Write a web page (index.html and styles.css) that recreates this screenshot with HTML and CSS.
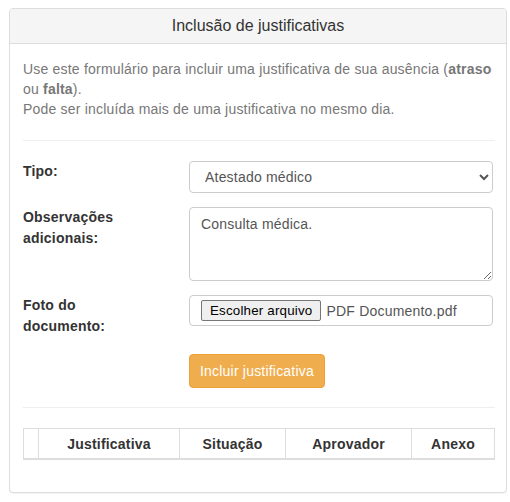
FILE: index.html
```html
<!DOCTYPE html>
<html lang="pt-BR">
<head>
<meta charset="utf-8">
<title>Inclusão de justificativas</title>
<link rel="stylesheet" href="styles.css">
</head>
<body>
<div class="page">
  <div class="panel">
    <div class="panel-heading">Inclusão de justificativas</div>
    <div class="panel-body">
      <p class="intro">Use este formulário para incluir uma justificativa de sua ausência (<b>atraso</b> ou <b>falta</b>).<br>Pode ser incluída mais de uma justificativa no mesmo dia.</p>
      <hr class="sep sep-top">
      <form class="form">
        <div class="row">
          <label class="lbl" for="tipo">Tipo:</label>
          <select id="tipo" class="control select">
            <option>Atestado médico</option>
            <option>Consulta</option>
          </select>
        </div>
        <div class="row">
          <label class="lbl" for="obs">Observações adicionais:</label>
          <textarea id="obs" class="control textarea">Consulta médica.</textarea>
        </div>
        <div class="row">
          <span class="lbl">Foto do documento:</span>
          <div class="control file">
            <span class="file-btn">Escolher arquivo</span>
            <span class="file-name">PDF Documento.pdf</span>
          </div>
        </div>
        <div class="row actions">
          <span></span>
          <div><button type="button" class="btn">Incluir justificativa</button></div>
        </div>
      </form>
      <hr class="sep sep-bottom">
      <table class="table">
        <colgroup>
          <col class="c0"><col class="c1"><col class="c2"><col class="c3"><col class="c4">
        </colgroup>
        <thead>
          <tr>
            <th></th>
            <th>Justificativa</th>
            <th>Situação</th>
            <th>Aprovador</th>
            <th>Anexo</th>
          </tr>
        </thead>
      </table>
    </div>
  </div>
</div>
</body>
</html>
```

FILE: styles.css
```css
* { box-sizing: border-box; }
html, body { margin: 0; padding: 0; background: #fff; }
body {
  font-family: "Liberation Sans", Arial, Helvetica, sans-serif;
  font-size: 14px;
  line-height: 20px;
  color: #333;
  letter-spacing: 0.2px;
}
.page { padding: 8px 4px 8px 9px; }
.panel {
  width: 498px;
  border: 1px solid #ddd;
  border-radius: 4px;
  box-shadow: 0 1px 1px rgba(0,0,0,0.05);
  background: #fff;
}
.panel-heading {
  background: #f5f5f5;
  border-bottom: 1px solid #ddd;
  border-radius: 3px 3px 0 0;
  padding: 8px 15px;
  height: 35px;
  font-size: 16px;
  line-height: 18px;
  text-align: center;
  color: #333;
  letter-spacing: 0;
}
.panel-body { padding: 15px 11px 32px 13px; }
.intro { margin: 0; color: #777; }
.intro b { color: #777; font-weight: bold; }
.sep { border: 0; border-top: 1px solid #eee; height: 0; margin: 0; }
.sep-top { margin-top: 21px; margin-bottom: 20px; }
.sep-bottom { margin-top: 19px; margin-bottom: 20px; }
.form { margin: 0; }
.row {
  display: grid;
  grid-template-columns: 166px 305px;
  align-items: start;
  margin-bottom: 14px;
}
.lbl {
  font-weight: bold;
  line-height: 21px;
  color: #333;
  padding-right: 40px;
}
.control {
  width: 304px;
  border: 1px solid #ccc;
  border-radius: 4px;
  font-family: "Liberation Sans", Arial, Helvetica, sans-serif;
  font-size: 14px;
  letter-spacing: 0.2px;
  color: #555;
  background: #fff;
}
.select {
  height: 32px;
  padding: 0 8px 0 11px;
  line-height: 20px;
}
.textarea {
  display: block;
  height: 74px;
  padding: 6px 11px;
  line-height: 20px;
  margin: 0;
  resize: vertical;
}
.file {
  height: 31px;
  padding: 4px 11px;
  display: flex;
  align-items: center;
  gap: 5px;
}
.file-btn {
  display: inline-block;
  height: 21px;
  padding: 1px 8px;
  border: 1px solid #767676;
  border-radius: 2px;
  background: #efefef;
  color: #000;
  font-size: 13.333px;
  line-height: 17px;
  white-space: nowrap;
}
.file-name { color: #555; white-space: nowrap; }
.actions { margin-top: 17px; margin-bottom: 0; }
.btn {
  display: inline-block;
  height: 34px;
  padding: 6px 10px;
  border: 1px solid #eea236;
  border-radius: 4px;
  background: #f0ad4e;
  color: #fff;
  font-family: "Liberation Sans", Arial, Helvetica, sans-serif;
  font-size: 14px;
  letter-spacing: 0.2px;
  line-height: 20px;
  cursor: pointer;
}
.table {
  width: 471px;
  border-collapse: collapse;
  table-layout: fixed;
  margin: 0;
}
.c0 { width: 15px; }
.c1 { width: 141px; }
.c2 { width: 106px; }
.c3 { width: 126px; }
.c4 { width: 83px; }
.table th {
  border: 1px solid #ddd;
  border-bottom: 2px solid #ddd;
  padding: 5px 8px 4px;
  line-height: 20px;
  font-weight: bold;
  text-align: center;
  color: #333;
}
```
